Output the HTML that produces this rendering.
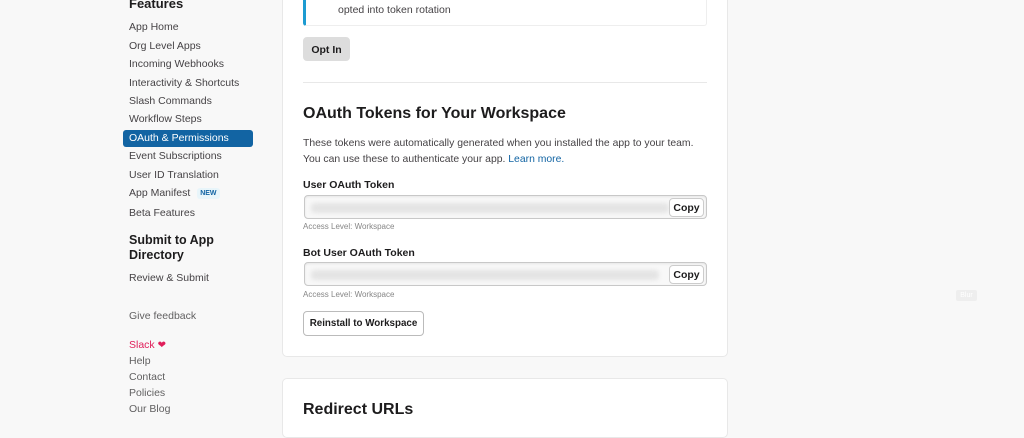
<!DOCTYPE html>
<html><head><style>
*{margin:0;padding:0;box-sizing:border-box}
body{width:1024px;height:418px;overflow:hidden;background:#f8f8f8;font-family:"Liberation Sans",sans-serif;color:#1d1c1d;position:relative}
.a,.btn{position:absolute;white-space:nowrap}
.nav{font-size:10.5px;color:#454245;left:129px}
.card{position:absolute;left:282px;width:446px;background:#fff;border:1px solid #e8e8e8;border-radius:5px}
.btn{border:1px solid #bbb;border-radius:4px;background:#fff;font-size:10.5px;font-weight:bold;text-align:center;color:#1d1c1d}
.field{position:absolute;left:304px;width:403px;height:24px;border:1px solid #c8c8c8;border-radius:4px;background:#f8f8f8;box-shadow:inset 0 1px 2px rgba(0,0,0,.08)}
.blur{position:absolute;left:6px;top:7px;height:10px;background:#e4e4e4;border-radius:4px;filter:blur(2px)}
</style></head><body>
<div class="a" style="left:129px;top:-4px;font-size:13px;font-weight:bold">Features</div>
<div class="a nav" style="top:21px">App Home</div>
<div class="a nav" style="top:40px">Org Level Apps</div>
<div class="a nav" style="top:58px">Incoming Webhooks</div>
<div class="a nav" style="top:77px">Interactivity &amp; Shortcuts</div>
<div class="a nav" style="top:95px">Slash Commands</div>
<div class="a nav" style="top:113px">Workflow Steps</div>
<div class="a" style="left:123px;top:130px;width:130px;height:17px;background:#1264a3;border-radius:3px;color:#fff;font-size:10.5px;padding:2px 0 0 6px">OAuth &amp; Permissions</div>
<div class="a nav" style="top:150px">Event Subscriptions</div>
<div class="a nav" style="top:169px">User ID Translation</div>
<div class="a nav" style="top:187px">App Manifest <span style="display:inline-block;background:#e8f5fa;color:#1264a3;font-size:7px;font-weight:bold;padding:2px 3px;border-radius:3px;margin-left:4px;vertical-align:1px">NEW</span></div>
<div class="a nav" style="top:207px">Beta Features</div>
<div class="a" style="left:129px;top:233px;font-size:12.5px;font-weight:bold;line-height:15px">Submit to App<br>Directory</div>
<div class="a nav" style="top:272px">Review &amp; Submit</div>
<div class="a nav" style="top:310px;color:#616061">Give feedback</div>
<div class="a nav" style="top:339px;color:#e01e5a">Slack <span style="font-size:10px">&#10084;</span></div>
<div class="a nav" style="top:355px;color:#616061">Help</div>
<div class="a nav" style="top:371px;color:#616061">Contact</div>
<div class="a nav" style="top:387px;color:#616061">Policies</div>
<div class="a nav" style="top:403px;color:#616061">Our Blog</div>

<div class="card" style="top:-10px;height:367px"></div>
<div class="a" style="left:303px;top:-10px;width:404px;height:36px;border:1px solid #eee;border-left:3px solid #1d9bd1;border-radius:3px;background:#fff"></div>
<div class="a" style="left:338px;top:4px;font-size:10.5px;color:#454245">opted into token rotation</div>
<div class="btn" style="left:303px;top:37px;width:47px;height:24px;background:#ddd;border-color:#ddd;padding-top:6px">Opt In</div>
<div class="a" style="left:303px;top:82px;width:404px;height:1px;background:#e8e8e8"></div>
<div class="a" style="left:303px;top:105px;font-size:16px;font-weight:bold">OAuth Tokens for Your Workspace</div>
<div class="a" style="left:303px;top:136px;font-size:10.4px;line-height:16px;color:#454245">These tokens were automatically generated when you installed the app to your team.<br>You can use these to authenticate your app. <span style="color:#1264a3">Learn more.</span></div>
<div class="a" style="left:303px;top:179px;font-size:10.5px;font-weight:bold">User OAuth Token</div>
<div class="field" style="top:195px"><div class="blur" style="width:358px"></div></div>
<div class="btn" style="left:669px;top:198px;width:35px;height:19px;padding-top:3px;border-color:#ccc">Copy</div>
<div class="a" style="left:303px;top:222px;font-size:8px;color:#868686">Access Level: Workspace</div>
<div class="a" style="left:303px;top:247px;font-size:10.5px;font-weight:bold">Bot User OAuth Token</div>
<div class="field" style="top:262px"><div class="blur" style="width:348px"></div></div>
<div class="btn" style="left:669px;top:265px;width:35px;height:19px;padding-top:3px;border-color:#ccc">Copy</div>
<div class="a" style="left:303px;top:290px;font-size:8px;color:#868686">Access Level: Workspace</div>
<div class="btn" style="left:303px;top:311px;width:121px;height:25px;padding-top:6px;font-size:9.8px">Reinstall to Workspace</div>

<div class="card" style="top:378px;height:60px"></div>
<div class="a" style="left:303px;top:401px;font-size:16px;font-weight:bold">Redirect URLs</div>
<div class="a" style="left:956px;top:290px;width:21px;height:11px;background:#eee;border-radius:2px;font-size:7px;color:#fff;text-align:center;line-height:11px">Blur</div>
</body></html>
